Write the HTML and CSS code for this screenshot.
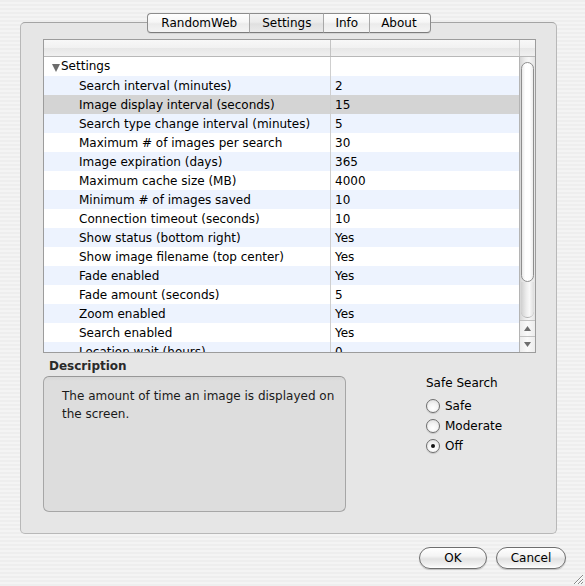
FILE: index.html
```html
<!DOCTYPE html>
<html>
<head>
<meta charset="utf-8">
<link rel="stylesheet" href="styles.css">
</head>
<body>
<div class="frame">
  <div class="tabs">
    <div class="tab">RandomWeb</div>
    <div class="tab sel">Settings</div>
    <div class="tab">Info</div>
    <div class="tab">About</div>
  </div>
  <div class="group">
    <div class="table">
      <div class="thead">
        <div class="th c1"></div>
        <div class="th c2"></div>
        <div class="th c3"></div>
      </div>
      <div class="tbody">
        <div class="rows">
          <div class="row w"><div class="k top"><span class="tri"></span>Settings</div><div class="v"></div></div>
          <div class="row b"><div class="k">Search interval (minutes)</div><div class="v">2</div></div>
          <div class="row s"><div class="k">Image display interval (seconds)</div><div class="v">15</div></div>
          <div class="row b"><div class="k">Search type change interval (minutes)</div><div class="v">5</div></div>
          <div class="row w"><div class="k">Maximum # of images per search</div><div class="v">30</div></div>
          <div class="row b"><div class="k">Image expiration (days)</div><div class="v">365</div></div>
          <div class="row w"><div class="k">Maximum cache size (MB)</div><div class="v">4000</div></div>
          <div class="row b"><div class="k">Minimum # of images saved</div><div class="v">10</div></div>
          <div class="row w"><div class="k">Connection timeout (seconds)</div><div class="v">10</div></div>
          <div class="row b"><div class="k">Show status (bottom right)</div><div class="v">Yes</div></div>
          <div class="row w"><div class="k">Show image filename (top center)</div><div class="v">Yes</div></div>
          <div class="row b"><div class="k">Fade enabled</div><div class="v">Yes</div></div>
          <div class="row w"><div class="k">Fade amount (seconds)</div><div class="v">5</div></div>
          <div class="row b"><div class="k">Zoom enabled</div><div class="v">Yes</div></div>
          <div class="row w"><div class="k">Search enabled</div><div class="v">Yes</div></div>
          <div class="row b"><div class="k">Location wait (hours)</div><div class="v">0</div></div>
        </div>
        <div class="scroll">
          <div class="track">
            <div class="thumb"></div>
            <div class="rest"></div>
          </div>
          <div class="arrow"><svg width="15" height="15" viewBox="0 0 15 15"><path d="M4 10 L11 10 L7.5 5 Z" fill="#6e6e6e"/></svg></div>
          <div class="arrow"><svg width="15" height="15" viewBox="0 0 15 15"><path d="M4 5 L11 5 L7.5 10 Z" fill="#6e6e6e"/></svg></div>
        </div>
      </div>
    </div>
    <div class="lower">
      <div class="desc">
        <div class="desc-label">Description</div>
        <div class="desc-box">The amount of time an image is displayed on<br>the screen.</div>
      </div>
      <div class="safe">
        <div class="safe-label">Safe Search</div>
        <div class="radio"><span class="dot"></span>Safe</div>
        <div class="radio"><span class="dot"></span>Moderate</div>
        <div class="radio"><span class="dot on"></span>Off</div>
      </div>
    </div>
  </div>
  <div class="buttons">
    <div class="btn ok">OK</div>
    <div class="btn cancel">Cancel</div>
  </div>
</div>
<svg class="grip" width="13" height="13" viewBox="0 0 13 13">
  <path d="M12 3 L3 12 M12 7 L7 12 M12 10 L10 12" stroke="#8a8a8a" stroke-width="1"/>
  <path d="M12 4 L4 12 M12 8 L8 12" stroke="#ffffff" stroke-width="1"/>
</svg>
</body>
</html>
```
FILE: styles.css
```css
html, body {
  margin: 0;
  padding: 0;
}
body {
  width: 585px;
  height: 586px;
  overflow: hidden;
  position: relative;
  font-family: "DejaVu Sans", "Liberation Sans", sans-serif;
  font-size: 12px;
  color: #000;
  background: repeating-linear-gradient(to bottom, #eeeeee 0px, #eeeeee 2px, #f4f4f4 2px, #f4f4f4 4px);
}
.frame {
  width: 537px;
  margin-left: 20px;
  padding-top: 13px;
}
.tabs {
  display: flex;
  justify-content: center;
  height: 20px;
  position: relative;
  z-index: 1;
  margin-left: 1px;
}
.tab {
  height: 18px;
  line-height: 18px;
  padding: 0 11px;
  border-top: 1px solid #8c8c8c;
  border-bottom: 1px solid #7c7c7c;
  border-left: 1px solid #a8a8a8;
  background: linear-gradient(to bottom, #ffffff 0%, #f6f6f6 45%, #ebebeb 55%, #f4f4f4 100%);
  box-shadow: 0 1px 0 rgba(0,0,0,0.08);
}
.tab:first-child {
  border-left: 1px solid #8c8c8c;
  border-radius: 4px 0 0 4px;
  padding-left: 13px;
  padding-right: 12px;
}
.tab:last-child {
  border-right: 1px solid #8c8c8c;
  border-radius: 0 4px 4px 0;
  padding-right: 13px;
}
.tab.sel {
  background: linear-gradient(to bottom, #f4f4f4 0%, #ebebeb 45%, #e0e0e0 55%, #eaeaea 100%);
  padding: 0 12px;
}
.group {
  margin-top: -11px;
  border: 1px solid #b8b8b8;
  border-top-color: #a4a4a4;
  border-radius: 5px;
  background: #e6e6e6;
  padding: 16px 0 0 22px;
  box-sizing: border-box;
  height: 512px;
}
.table {
  width: 493px;
  height: 314px;
  box-sizing: border-box;
  border: 1px solid #9c9c9c;
  background: #fff;
  display: flex;
  flex-direction: column;
}
.thead {
  display: flex;
  height: 16px;
  border-bottom: 1px solid #b8b8b8;
  background: linear-gradient(to bottom, #f8f8f8 0%, #f1f1f1 50%, #e7e7e7 51%, #f0f0f0 100%);
}
.th {
  height: 16px;
}
.th.c1 { width: 286px; border-right: 1px solid #c4c4c4; }
.th.c2 { width: 188px; border-right: 1px solid #c4c4c4; }
.th.c3 { flex: 1; }
.tbody {
  display: flex;
  flex: 1;
  min-height: 0;
}
.rows {
  width: 475px;
  overflow: hidden;
}
.row {
  display: flex;
  height: 19px;
  line-height: 21px;
  white-space: nowrap;
}
.row.w { background: #ffffff; }
.row.b { background: #edf3fe; }
.row.s { background: #d4d4d4; }
.k {
  width: 287px;
  box-sizing: border-box;
  padding-left: 35px;
  border-right: 1px solid #cfcfcf;
  overflow: hidden;
}
.k.top {
  padding-left: 8px;
  display: flex;
  align-items: center;
}
.tri {
  display: inline-block;
  width: 0;
  height: 0;
  border-left: 4.5px solid transparent;
  border-right: 4.5px solid transparent;
  border-top: 8px solid #6c6c6c;
  margin-right: 1px;
  margin-top: 2px;
}
.v {
  flex: 1;
  padding-left: 4px;
}
.scroll {
  width: 15px;
  border-left: 1px solid #b4b4b4;
  display: flex;
  flex-direction: column;
  background: linear-gradient(to right, #d6d6d6 0%, #eeeeee 35%, #f7f7f7 60%, #e4e4e4 100%);
}
.track {
  flex: 1;
  display: flex;
  flex-direction: column;
  padding: 5px 1px 2px 1px;
}
.thumb {
  height: 220px;
  border: 1px solid #8e8e8e;
  border-radius: 7px;
  background: linear-gradient(to right, #e9e9e9 0%, #ffffff 30%, #ffffff 70%, #ececec 100%);
  box-sizing: border-box;
}
.rest {
  flex: 1;
  border-radius: 0 0 7px 7px;
  background: linear-gradient(to right, #cfcfcf 0%, #ececec 40%, #f8f8f8 65%, #dddddd 100%);
  border-bottom: 1px solid #b0b0b0;
}
.arrow {
  height: 15px;
  border-top: 1px solid #c2c2c2;
  background: linear-gradient(to right, #ececec, #fafafa 50%, #ececec);
}
.arrow svg { display: block; }
.lower {
  display: flex;
}
.desc {
  width: 303px;
}
.desc-label {
  height: 16px;
  padding-top: 6px;
  line-height: 14px;
  padding-left: 6px;
  font-weight: bold;
  color: #2a2a2a;
}
.desc-box {
  height: 136px;
  box-sizing: border-box;
  border: 1px solid #a6a6a6;
  border-top-color: #979797;
  border-radius: 6px;
  background: linear-gradient(to bottom, #d6d6d6 0px, #dddddd 4px, #dddddd 100%);
  padding: 10px 4px 0 18px;
  line-height: 18px;
  margin-top: 1px;
  color: #1a1a1a;
}
.safe {
  margin-left: 80px;
  padding-top: 22px;
}
.safe-label {
  line-height: 16px;
  height: 16px;
  margin-bottom: 5px;
}
.radio {
  display: flex;
  align-items: center;
  height: 20px;
  line-height: 20px;
}
.dot {
  width: 14px;
  height: 14px;
  box-sizing: border-box;
  border-radius: 50%;
  border: 1px solid #6e6e6e;
  background: radial-gradient(circle at 50% 70%, #ffffff 0%, #f4f4f4 45%, #d8d8d8 100%);
  margin-right: 5px;
  display: flex;
  align-items: center;
  justify-content: center;
  box-shadow: 0 1px 1px rgba(0,0,0,0.15);
}
.dot.on::after {
  content: "";
  width: 4px;
  height: 4px;
  border-radius: 50%;
  background: #111;
}
.buttons {
  display: flex;
  justify-content: flex-end;
  margin-top: 13px;
  margin-right: -9px;
}
.btn {
  height: 22px;
  box-sizing: border-box;
  border: 1px solid #6f6f6f;
  border-radius: 11px;
  line-height: 20px;
  text-align: center;
  background: linear-gradient(to bottom, #ffffff 0%, #f4f4f4 40%, #e2e2e2 55%, #f2f2f2 85%, #ffffff 100%);
  box-shadow: 0 1px 1px rgba(0,0,0,0.2);
}
.btn.ok { width: 68px; margin-right: 9px; }
.btn.cancel { width: 70px; }
.grip {
  position: absolute;
  right: 1px;
  bottom: 1px;
}
```
